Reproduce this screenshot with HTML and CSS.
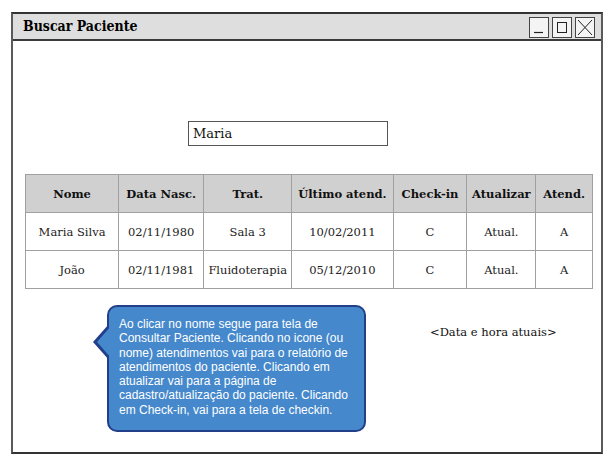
FILE: index.html
```html
<!DOCTYPE html>
<html>
<head>
<meta charset="utf-8">
<link rel="stylesheet" href="styles.css">
</head>
<body>
<div class="window">
  <div class="titlebar">
    <span class="title">Buscar Paciente</span>
    <div class="controls">
      <span class="ctl"><svg width="18" height="19" viewBox="0 0 18 19"><path d="M4 14.5H13" stroke="#222" stroke-width="1.2"/></svg></span>
      <span class="ctl"><svg width="18" height="19" viewBox="0 0 18 19"><rect x="4.5" y="4.5" width="9" height="10" fill="none" stroke="#222" stroke-width="1"/></svg></span>
      <span class="ctl"><svg width="18" height="19" viewBox="0 0 18 19"><path d="M2 2L16 17M16 2L2 17" stroke="#222" stroke-width="1"/></svg></span>
    </div>
  </div>
  <div class="content">
    <div class="search">Maria</div>
    <table class="grid">
      <colgroup>
        <col class="c1"><col class="c2"><col class="c3"><col class="c4"><col class="c5"><col class="c6"><col class="c7">
      </colgroup>
      <thead>
        <tr>
          <th>Nome</th>
          <th>Data Nasc.</th>
          <th>Trat.</th>
          <th>Último atend.</th>
          <th>Check-in</th>
          <th>Atualizar</th>
          <th>Atend.</th>
        </tr>
      </thead>
      <tbody>
        <tr>
          <td>Maria Silva</td><td>02/11/1980</td><td>Sala 3</td><td>10/02/2011</td><td>C</td><td>Atual.</td><td>A</td>
        </tr>
        <tr>
          <td>João</td><td>02/11/1981</td><td>Fluidoterapia</td><td>05/12/2010</td><td>C</td><td>Atual.</td><td>A</td>
        </tr>
      </tbody>
    </table>
    <div class="bottom">
      <div class="callout">Ao clicar no nome segue para tela de Consultar Paciente. Clicando no icone (ou nome) atendimentos vai para o relatório de atendimentos do paciente. Clicando em atualizar vai para a página de cadastro/atualização do paciente. Clicando em Check-in, vai para a tela de checkin.</div>
      <div class="datetime">&lt;Data e hora atuais&gt;</div>
    </div>
  </div>
</div>
</body>
</html>
```
FILE: styles.css
```css
html, body {
  margin: 0;
  padding: 0;
  background: #ffffff;
}
body {
  padding: 12px 0 0 11px;
}
.window {
  width: 588px;
  height: 438px;
  border: 2px solid #5a5a5a;
  border-top-color: #333;
  border-bottom-color: #333;
  display: flex;
  flex-direction: column;
  font-family: "DejaVu Serif", serif;
  color: #111;
}
.titlebar {
  height: 25px;
  background: #dedede;
  border-bottom: 2px solid #3a3a3a;
  display: flex;
  align-items: center;
  justify-content: space-between;
  padding: 0 6px 0 10px;
}
.title {
  font-family: "DejaVu Serif Condensed", "DejaVu Serif", serif;
  font-stretch: condensed;
  font-weight: bold;
  font-size: 14px;
  color: #000;
  margin-top: -2px;
}
.controls {
  display: flex;
  gap: 3px;
  margin-top: 2px;
}
.ctl {
  width: 18px;
  height: 19px;
  border: 1px solid #444;
  background: #f4f4f4;
  display: block;
}
.ctl svg {
  display: block;
}
.content {
  flex: 1;
  display: flex;
  flex-direction: column;
  padding: 0 8px 0 12px;
}
.search {
  margin: 80px 0 0 163px;
  width: 194px;
  height: 23px;
  border: 1px solid #555;
  font-size: 13px;
  line-height: 23px;
  padding-left: 4px;
  color: #111;
}
.grid {
  margin-top: 28px;
  width: 568px;
  border-collapse: collapse;
  border: 1px solid #b5b5b5;
  font-size: 11.5px;
  table-layout: fixed;
}
.grid th, .grid td {
  border: 1px solid #a0a0a0;
  text-align: center;
  padding: 0;
  white-space: nowrap;
}
.grid th {
  background: #d0d0d0;
  height: 37px;
  font-weight: bold;
  color: #111;
}
.grid td {
  height: 37px;
  color: #222;
}
.c1 { width: 92px; }
.c2 { width: 84px; }
.c3 { width: 87px; }
.c4 { width: 100px; }
.c5 { width: 73px; }
.c6 { width: 68px; }
.c7 { width: 56px; }
.bottom {
  display: flex;
  align-items: flex-start;
  margin-top: 16px;
}
.callout {
  position: relative;
  margin-left: 82px;
  width: 235px;
  height: 113px;
  padding: 10px 10px 0 10px;
  background: #4588cc;
  border: 2px solid #223f8a;
  border-radius: 10px;
  color: #ffffff;
  font-family: "Liberation Sans", Arial, sans-serif;
  font-size: 12px;
  line-height: 14.3px;
}
.callout::before {
  content: "";
  position: absolute;
  left: -16px;
  top: 17px;
  border-style: solid;
  border-width: 18px 16px 18px 0;
  border-color: transparent #223f8a transparent transparent;
}
.callout::after {
  content: "";
  position: absolute;
  left: -12px;
  top: 19px;
  border-style: solid;
  border-width: 16px 14px 16px 0;
  border-color: transparent #4588cc transparent transparent;
}
.datetime {
  margin: 20px 0 0 64px;
  font-size: 11.5px;
  color: #111;
}
```
